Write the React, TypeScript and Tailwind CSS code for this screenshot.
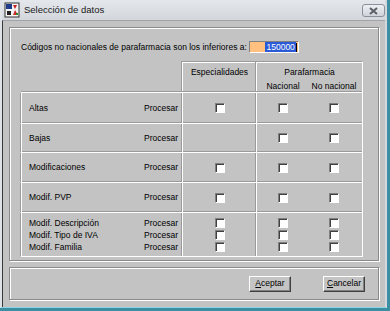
import React from "react";

const font = { fontFamily: '"Liberation Sans", Arial, sans-serif' };

function Check() {
  return (
    <span className="inline-block h-[10px] w-[10px] border border-t-[#808080] border-l-[#808080] border-b-white border-r-white bg-white shadow-[inset_1px_1px_0_#404040]" />
  );
}

function Cells({ esp = true }: { esp?: boolean }) {
  return (
    <>
      <div className="flex items-center justify-center border-l border-l-white shadow-[-1px_0_0_#9a9a9a]">
        {esp && <Check />}
      </div>
      <div className="grid grid-cols-[52px_50px_1fr] items-center border-l border-l-white shadow-[-1px_0_0_#9a9a9a]">
        <div className="flex justify-center">
          <Check />
        </div>
        <div className="flex justify-center">
          <Check />
        </div>
        <div />
      </div>
    </>
  );
}

function Row({ label, h, esp = true }: { label: string; h: string; esp?: boolean }) {
  return (
    <div className={`grid grid-cols-[161px_74px_107px] ${h} border-t border-t-white shadow-[0_-1px_0_#9a9a9a]`}>
      <div className="flex items-center justify-between border-l border-l-white pl-[7px] pr-[4px] shadow-[-1px_0_0_#9a9a9a]">
        <span>{label}</span>
        <span>Procesar</span>
      </div>
      <Cells esp={esp} />
    </div>
  );
}

function Button({ first, rest }: { first: string; rest: string }) {
  return (
    <button className="flex h-[16px] w-[42px] items-center justify-center border border-t-white border-l-white border-b-[#404040] border-r-[#404040] bg-[#c4c4c4] text-[8.5px] text-black shadow-[inset_-1px_-1px_0_#808080]">
      <span className="underline">{first}</span>
      {rest}
    </button>
  );
}

export default function App() {
  return (
    <div className="h-[311px] w-[390px] bg-[#3c8fa2]" style={font}>
      <div className="flex h-[308px] w-[387px] flex-col border-l-2 border-r-2 border-b border-l-[#dfe2e6] border-r-[#d4d8dd] border-b-[#8fd4e2] bg-[#d8dbe0]">
        <div className="flex h-[20px] shrink-0 items-center bg-gradient-to-b from-[#e4e7eb] to-[#d3d7dc] pl-[2px]">
          <svg width="16" height="16" viewBox="0 0 16 16" className="mr-[4px]">
            <rect x="1" y="1" width="14" height="14" fill="#f4f4f4" stroke="#303030" />
            <rect x="2" y="2" width="6" height="5" fill="#1f3c8a" />
            <path d="M9 3l4 0-2 4z" fill="#c82020" />
            <rect x="3" y="9" width="4" height="4" fill="#202020" />
            <path d="M9 13l2-5 3 5z" fill="#d02828" />
            <rect x="12" y="11" width="2" height="2" fill="#2a8a2a" />
          </svg>
          <span className="text-[9.5px] text-[#1a1a1a]">Selección de datos</span>
          <div className="ml-auto mt-[4px] flex h-[13px] w-[23px] items-center justify-center self-start rounded-[3px] border border-[#8a9099] bg-gradient-to-b from-[#eef0f3] to-[#cfd4da]">
            <svg width="9" height="8" viewBox="0 0 9 8">
              <path d="M1 1l7 6M8 1L1 7" stroke="#5a5f66" strokeWidth="2" />
            </svg>
          </div>
        </div>
        <div className="flex flex-1 flex-col border-l border-t border-l-[#3a3a3a] border-t-[#a0a4a8] bg-[#c3c3c3] px-[6px] pt-[6px] text-[8.5px] text-black">
          <div className="flex h-[234px] flex-col border border-[#8a8a8a] pl-[11px] pt-[13px] shadow-[inset_1px_1px_0_#fff,1px_1px_0_#fff]">
            <div className="flex h-[12px] items-center">
              <span>Códigos no nacionales de parafarmacia son los inferiores a:</span>
              <div className="ml-[2px] flex h-[12px] w-[50px] items-center justify-end border border-t-[#808080] border-l-[#808080] border-b-white border-r-white bg-[#ffc080] pr-[1px]">
                <span className="bg-[#2a5ad6] px-[1px] leading-[10px] text-white">150000</span>
                <span className="h-[9px] w-px bg-black" />
              </div>
            </div>
            <div className="mt-[9px] grid w-[342px] grid-cols-[161px_74px_107px]">
              <div className="h-[30px]" />
              <div className="flex h-[30px] justify-center border-l border-t border-l-white border-t-white pt-[3px] shadow-[-1px_-1px_0_#9a9a9a]">
                Especialidades
              </div>
              <div className="flex h-[30px] flex-col border-l border-r border-t border-white pt-[3px] shadow-[-1px_-1px_0_#9a9a9a]">
                <div className="text-center">Parafarmacia</div>
                <div className="mt-[1px] grid grid-cols-[52px_50px_1fr]">
                  <span className="text-center">Nacional</span>
                  <span className="whitespace-nowrap text-center">No nacional</span>
                </div>
              </div>
              <div className="col-span-3 border-r border-b border-white">
                <Row label="Altas" h="h-[31px]" />
                <Row label="Bajas" h="h-[29px]" esp={false} />
                <Row label="Modificaciones" h="h-[30px]" />
                <Row label="Modif. PVP" h="h-[30px]" />
                <div className="grid h-[44px] grid-cols-[161px_74px_107px] border-t border-t-white shadow-[0_-1px_0_#9a9a9a]">
                  <div className="flex flex-col justify-center gap-[2px] border-l border-l-white pl-[7px] pr-[4px] pt-[1px] shadow-[-1px_0_0_#9a9a9a]">
                    {["Modif. Descripción", "Modif. Tipo de IVA", "Modif. Familia"].map((l) => (
                      <div key={l} className="flex h-[10px] items-center justify-between">
                        <span>{l}</span>
                        <span>Procesar</span>
                      </div>
                    ))}
                  </div>
                  <div className="flex flex-col items-center justify-center gap-[2px] border-l border-l-white shadow-[-1px_0_0_#9a9a9a]">
                    <Check />
                    <Check />
                    <Check />
                  </div>
                  <div className="grid grid-cols-[52px_50px_1fr] items-center border-l border-l-white shadow-[-1px_0_0_#9a9a9a]">
                    <div className="flex flex-col items-center gap-[2px]">
                      <Check />
                      <Check />
                      <Check />
                    </div>
                    <div className="flex flex-col items-center gap-[2px]">
                      <Check />
                      <Check />
                      <Check />
                    </div>
                    <div />
                  </div>
                </div>
              </div>
            </div>
          </div>
          <div className="mt-[6px] flex h-[33px] items-center justify-end gap-[32px] border border-[#8a8a8a] pr-[13px] shadow-[inset_1px_1px_0_#fff,1px_1px_0_#fff]">
            <Button first="A" rest="ceptar" />
            <Button first="C" rest="ancelar" />
          </div>
        </div>
      </div>
    </div>
  );
}
